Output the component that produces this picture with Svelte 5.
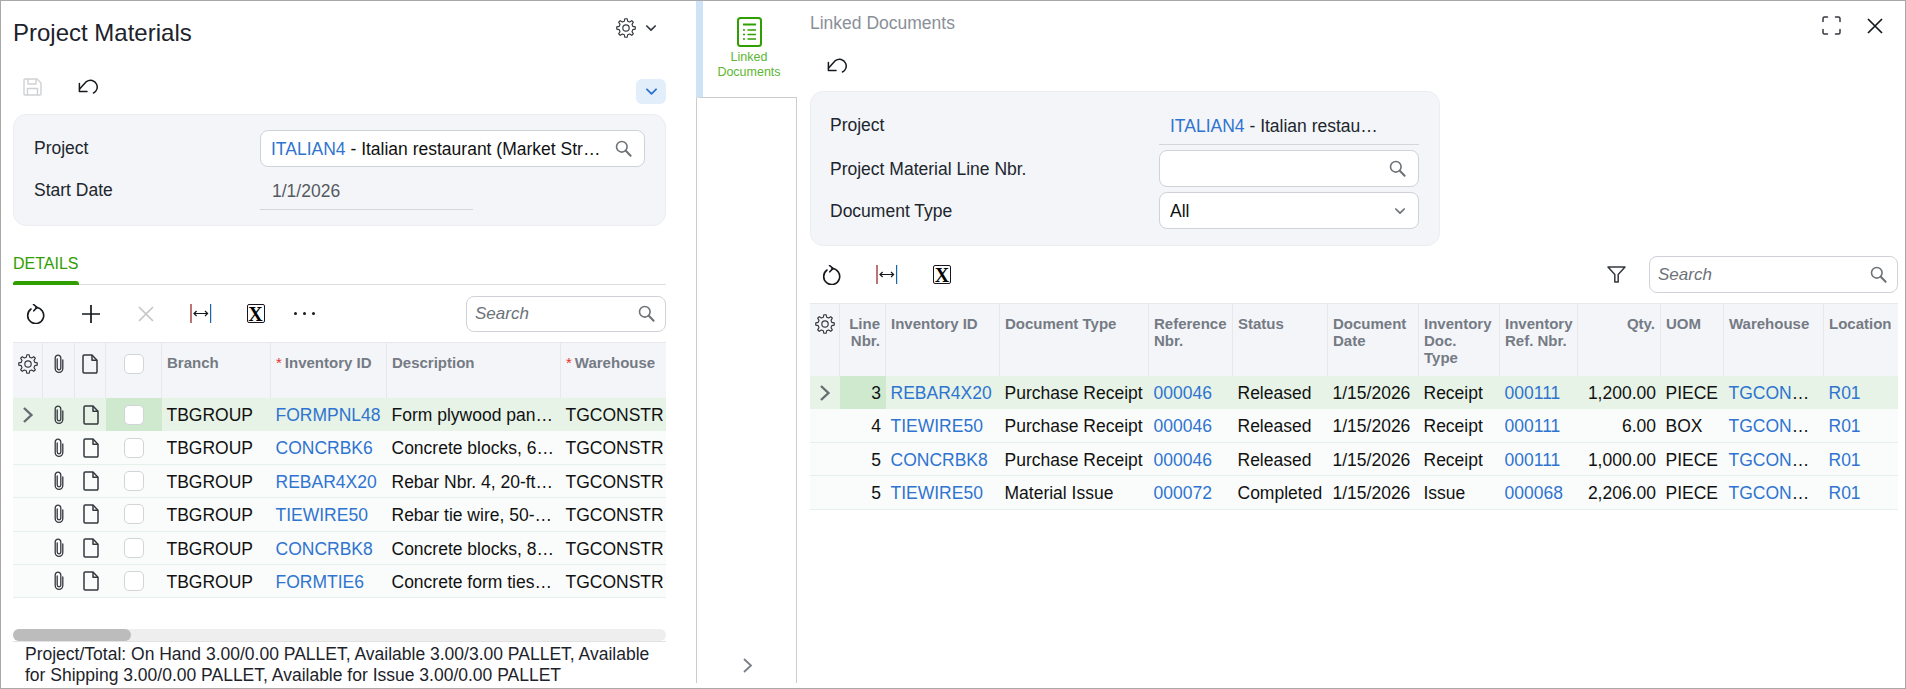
<script lang="ts">
  // outline gear with 8 teeth, 24x24 box
  function makeGear() {
    const pts: string[] = [];
    const teeth = 8;
    for (let i = 0; i < teeth; i++) {
      const a = (i / teeth) * Math.PI * 2;
      const step = Math.PI / teeth;
      const p = (r: number, t: number) =>
        `${(12 + r * Math.cos(t)).toFixed(2)} ${(12 + r * Math.sin(t)).toFixed(2)}`;
      pts.push(p(8.4, a - step * 0.62), p(11.2, a - step * 0.3), p(11.2, a + step * 0.3), p(8.4, a + step * 0.62));
    }
    return "M" + pts.join("L") + "Z";
  }
  const gearPath = makeGear();

  const materials = [
    { id: "FORMPNL48", desc: "Form plywood panels, 4x8 ft" },
    { id: "CONCRBK6", desc: "Concrete blocks, 6-inch standard" },
    { id: "REBAR4X20", desc: "Rebar Nbr. 4, 20-ft length" },
    { id: "TIEWIRE50", desc: "Rebar tie wire, 50-pound roll" },
    { id: "CONCRBK8", desc: "Concrete blocks, 8-inch standard" },
    { id: "FORMTIE6", desc: "Concrete form ties, 6-inch" },
  ];

  const linked = [
    { line: 3, id: "REBAR4X20", type: "Purchase Receipt", ref: "000046", status: "Released", invType: "Receipt", invRef: "000111", qty: "1,200.00", uom: "PIECE" },
    { line: 4, id: "TIEWIRE50", type: "Purchase Receipt", ref: "000046", status: "Released", invType: "Receipt", invRef: "000111", qty: "6.00", uom: "BOX" },
    { line: 5, id: "CONCRBK8", type: "Purchase Receipt", ref: "000046", status: "Released", invType: "Receipt", invRef: "000111", qty: "1,000.00", uom: "PIECE" },
    { line: 5, id: "TIEWIRE50", type: "Material Issue", ref: "000072", status: "Completed", invType: "Issue", invRef: "000068", qty: "2,206.00", uom: "PIECE" },
  ];
</script>

{#snippet gear(size)}
  <svg width={size} height={size} viewBox="0 0 24 24" fill="none" stroke="#33383f" stroke-width="1.4" stroke-linejoin="round">
    <path d={gearPath} />
    <circle cx="12" cy="12" r="3.8" />
  </svg>
{/snippet}

{#snippet search()}
  <svg width="17" height="17" viewBox="0 0 17 17" fill="none" stroke="#6d7278" stroke-width="1.6" stroke-linecap="round">
    <circle cx="6.8" cy="6.8" r="5.3" />
    <path d="M10.8 10.8L15.6 15.8" stroke-width="2" />
  </svg>
{/snippet}

{#snippet chevronDown(color, size)}
  <svg width={size} height={size} viewBox="0 0 12 12" fill="none" stroke={color} stroke-width="1.7" stroke-linecap="round" stroke-linejoin="round">
    <path d="M1.8 4L6 8.2L10.2 4" />
  </svg>
{/snippet}

{#snippet chevronRight()}
  <svg class="row-arrow" width="12" height="16" viewBox="0 0 12 16" fill="none" stroke="#666c74" stroke-width="2.4">
    <path d="M2 1L9.4 8L2 15" />
  </svg>
{/snippet}

{#snippet undo()}
  <svg width="21" height="15" viewBox="0 0 21 15" fill="none" stroke="#15181c" stroke-width="1.5" stroke-linecap="round" stroke-linejoin="round">
    <path d="M15.5 14C19 12.2 20 8.4 18.6 5.2C16.8 1.2 12 0 8.4 2.6L1.6 10" />
    <path d="M1.4 4.6V12.4H9" />
  </svg>
{/snippet}

{#snippet refresh()}
  <svg width="20" height="20" viewBox="0 0 20 20" fill="none" stroke="#15181c" stroke-width="1.6" stroke-linecap="round" stroke-linejoin="round">
    <path d="M5 5A8 8 0 1 0 10 3.500" />
    <path d="M7.500 0.500L11 3.400L7.800 6.800" />
  </svg>
{/snippet}

{#snippet autofit()}
  <svg width="22" height="19" viewBox="0 0 22 19" fill="none" stroke-width="1.2">
    <path d="M1 0V19" stroke="#8b1a1a" />
    <path d="M20.6 0V19" stroke="#1565b0" />
    <path d="M4 9.5H17.6M6.6 7L4 9.5L6.6 12M15 7L17.6 9.5L15 12" stroke="#15181c" />
  </svg>
{/snippet}

{#snippet excel()}
  <span class="excel">X</span>
{/snippet}

{#snippet clip()}
  <svg width="12" height="20" viewBox="0 0 12 20" fill="none" stroke="#33383f" stroke-width="1.3" stroke-linecap="round">
    <path d="M4.2 5V14a1.8 1.8 0 0 0 3.6 0V4a2.8 2.8 0 0 0-5.6 0V14.5a3.8 3.8 0 0 0 7.6 0V6" />
  </svg>
{/snippet}

{#snippet doc()}
  <svg width="16" height="20" viewBox="0 0 16 20" fill="none" stroke="#33383f" stroke-width="1.5" stroke-linejoin="round">
    <path d="M1 2.2A1.2 1.2 0 0 1 2.2 1H10L15 6.2V17.8A1.2 1.2 0 0 1 13.8 19H2.2A1.2 1.2 0 0 1 1 17.8Z" />
    <path d="M10 1V6.2H15" />
  </svg>
{/snippet}

<div class="window">
  <section class="left">
    <header class="page-head">
      <h1>Project Materials</h1>
      <div class="head-tools">
        {@render gear(20)}
        {@render chevronDown("#33383f", 12)}
      </div>
    </header>

    <div class="action-row">
      <svg class="save" width="19" height="18" viewBox="0 0 19 18" fill="none" stroke="#cfd1d4" stroke-width="1.4" stroke-linejoin="round">
        <path d="M1 2A1 1 0 0 1 2 1H14L18 5V16A1 1 0 0 1 17 17H2A1 1 0 0 1 1 16Z" />
        <path d="M5 1V6H13V1M4.500 17V10.500H14.500V17" />
      </svg>
      <span class="undo-wrap">{@render undo()}</span>
      <button class="collapse" aria-label="Collapse">{@render chevronDown("#2f74d0", 13)}</button>
    </div>

    <div class="form-panel left-form">
      <label for="project" class="top">Project</label>
      <div class="input" id="project">
        <span class="input-text"><a href="#top">ITALIAN4</a> - Italian restaurant (Market Street Renovation)</span>
        {@render search()}
      </div>
      <label for="start" class="lower">Start Date</label>
      <div class="readonly" id="start">1/1/2026</div>
    </div>

    <div class="tabs">
      <div class="tab">
        <span>DETAILS</span>
        <div class="tab-bar"></div>
      </div>
    </div>

    <div class="toolbar">
      <span class="tool">{@render refresh()}</span>
      <span class="tool">
        <svg width="18" height="18" viewBox="0 0 18 18" stroke="#15181c" stroke-width="1.7"><path d="M9 0V18M0 9H18" /></svg>
      </span>
      <span class="tool">
        <svg width="16" height="16" viewBox="0 0 16 16" stroke="#c4c6c9" stroke-width="1.7"><path d="M1 1L15 15M15 1L1 15" /></svg>
      </span>
      <span class="tool">{@render autofit()}</span>
      <span class="tool">{@render excel()}</span>
      <span class="tool dots"><i></i><i></i><i></i></span>
      <div class="search-box left-search">
        <span>Search</span>
        {@render search()}
      </div>
    </div>

    <div class="grid left-grid">
      <div class="grid-row head">
        <div class="cell icon-cell">{@render gear(20)}</div>
        <div class="cell icon-cell">{@render clip()}</div>
        <div class="cell icon-cell">{@render doc()}</div>
        <div class="cell icon-cell"><span class="check"></span></div>
        <div class="cell">Branch</div>
        <div class="cell"><em>*</em>Inventory ID</div>
        <div class="cell">Description</div>
        <div class="cell"><em>*</em>Warehouse</div>
      </div>
      {#each materials as item, index}
        <div class="grid-row body" class:selected={index === 0}>
          <div class="cell icon-cell">
            {#if index === 0}{@render chevronRight()}{/if}
          </div>
          <div class="cell icon-cell">{@render clip()}</div>
          <div class="cell icon-cell">{@render doc()}</div>
          <div class="cell icon-cell current"><span class="check"></span></div>
          <div class="cell">TBGROUP</div>
          <div class="cell"><a href="#top">{item.id}</a></div>
          <div class="cell">{item.desc}</div>
          <div class="cell whs">TGCONSTR</div>
        </div>
      {/each}
    </div>

    <div class="scrollbar"><div class="thumb"></div></div>
    <p class="totals">Project/Total: On Hand 3.00/0.00 PALLET, Available 3.00/3.00 PALLET, Available for Shipping 3.00/0.00 PALLET, Available for Issue 3.00/0.00 PALLET</p>
  </section>

  <aside class="side">
    <div class="side-tab">
      <svg width="25" height="30" viewBox="0 0 25 30" fill="none" stroke="#2f9e00" stroke-width="2">
        <rect x="1" y="1" width="23" height="28" rx="2.500" />
        <path d="M6 7.500H19" />
        <path d="M6 13H8M10.500 13H19M6 17.500H8M10.500 17.500H19M6 22H8M10.500 22H19" stroke-width="1.700" />
      </svg>
      <span>Linked<br />Documents</span>
    </div>
    <div class="side-rest">
      <svg width="10" height="15" viewBox="0 0 10 15" fill="none" stroke="#7a7f86" stroke-width="1.800">
        <path d="M1 1L8 7.500L1 14" />
      </svg>
    </div>
  </aside>

  <main class="right">
    <header class="right-head">
      <h2>Linked Documents</h2>
      <svg width="19" height="19" viewBox="0 0 19 19" fill="none" stroke="#33383f" stroke-width="1.500" stroke-linecap="round">
        <path d="M1 5.500V2.500A1.500 1.500 0 0 1 2.500 1H5.500M13.500 1H16.500A1.500 1.500 0 0 1 18 2.500V5.500M18 13.500V16.500A1.500 1.500 0 0 1 16.500 18H13.500M5.500 18H2.500A1.500 1.500 0 0 1 1 16.500V13.500" />
      </svg>
      <svg class="close" width="16" height="16" viewBox="0 0 16 16" stroke="#15181c" stroke-width="1.700"><path d="M1 1L15 15M15 1L1 15" /></svg>
    </header>

    <div class="undo-row">{@render undo()}</div>

    <div class="form-panel right-form">
      <label for="rproject" class="first">Project</label>
      <div class="readonly" id="rproject"><a href="#top">ITALIAN4</a> - Italian restau…</div>
      <label for="rline">Project Material Line Nbr.</label>
      <div class="input" id="rline">
        <span class="input-text"></span>
        {@render search()}
      </div>
      <label for="rtype">Document Type</label>
      <div class="input select" id="rtype">
        <span class="input-text">All</span>
        {@render chevronDown("#6d7278", 12)}
      </div>
    </div>

    <div class="toolbar right-toolbar">
      <span class="tool">{@render refresh()}</span>
      <span class="tool">{@render autofit()}</span>
      <span class="tool">{@render excel()}</span>
      <svg class="filter" width="19" height="17" viewBox="0 0 19 17" fill="none" stroke="#33383f" stroke-width="1.500" stroke-linejoin="round">
        <path d="M1 1H18L11.200 8.500V16H7.800V8.500Z" />
      </svg>
      <div class="search-box right-search">
        <span>Search</span>
        {@render search()}
      </div>
    </div>

    <div class="grid right-grid">
      <div class="grid-row head">
        <div class="cell icon-cell">{@render gear(20)}</div>
        <div class="cell num">Line Nbr.</div>
        <div class="cell">Inventory ID</div>
        <div class="cell">Document Type</div>
        <div class="cell">Reference Nbr.</div>
        <div class="cell">Status</div>
        <div class="cell">Document Date</div>
        <div class="cell">Inventory Doc. Type</div>
        <div class="cell">Inventory Ref. Nbr.</div>
        <div class="cell num">Qty.</div>
        <div class="cell">UOM</div>
        <div class="cell">Warehouse</div>
        <div class="cell">Location</div>
      </div>
      {#each linked as row, index}
        <div class="grid-row body" class:selected={index === 0}>
          <div class="cell icon-cell">
            {#if index === 0}{@render chevronRight()}{/if}
          </div>
          <div class="cell num current">{row.line}</div>
          <div class="cell"><a href="#top">{row.id}</a></div>
          <div class="cell">{row.type}</div>
          <div class="cell"><a href="#top">{row.ref}</a></div>
          <div class="cell">{row.status}</div>
          <div class="cell">1/15/2026</div>
          <div class="cell">{row.invType}</div>
          <div class="cell"><a href="#top">{row.invRef}</a></div>
          <div class="cell num">{row.qty}</div>
          <div class="cell">{row.uom}</div>
          <div class="cell"><a href="#top">TGCONSTR</a></div>
          <div class="cell"><a href="#top">R01</a></div>
        </div>
      {/each}
    </div>
  </main>
</div>

<style>
  :global(body) {
    margin: 0;
    background: #fff;
  }

  .window {
    width: 1906px;
    height: 689px;
    box-sizing: border-box;
    border: 1px solid #a8a8a8;
    display: flex;
    overflow: hidden;
    font-family: "Liberation Sans", Arial, sans-serif;
    font-size: 17.5px;
    color: #111;
  }

  a {
    color: #2f74d0;
    text-decoration: none;
  }

  h1,
  h2,
  p {
    margin: 0;
    font-weight: 400;
  }

  label {
    padding-top: 1px;
  }

  /* left pane */
  .left {
    width: 695px;
    flex-shrink: 0;
    box-sizing: border-box;
    padding: 0 30px 0 12px;
    display: flex;
    flex-direction: column;
    overflow: hidden;
  }

  .page-head {
    height: 66px;
    flex-shrink: 0;
    display: flex;
    justify-content: space-between;
    align-items: flex-start;
  }

  h1 {
    font-size: 24px;
    line-height: 28px;
    margin-top: 18px;
    color: #1d232b;
  }

  .head-tools {
    display: flex;
    align-items: center;
    gap: 9px;
    margin: 17px 9px 0 0;
  }

  .action-row {
    height: 47px;
    flex-shrink: 0;
    display: flex;
    align-items: flex-start;
  }

  .save {
    margin: 11px 0 0 10px;
  }

  .undo-wrap {
    margin: 11px 0 0 36px;
  }

  .collapse {
    margin: 12px 0 0 auto;
    width: 30px;
    height: 25px;
    padding: 0;
    border: 0;
    border-radius: 6px;
    background: #e3eefb;
    display: flex;
    align-items: center;
    justify-content: center;
  }

  .form-panel {
    box-sizing: border-box;
    flex-shrink: 0;
    background: #f4f5f8;
    border: 1px solid #ebedf0;
    border-radius: 13px;
    display: grid;
    align-items: center;
    color: #20262e;
  }

  .left-form {
    height: 112px;
    padding: 15px 20px 0;
    grid-template-columns: 226px 385px;
    grid-template-rows: 37px 43px;
    align-content: start;
  }

  .top {
    padding-top: 0;
  }

  .lower {
    padding-top: 4px;
  }

  .input {
    box-sizing: border-box;
    height: 37px;
    background: #fff;
    border: 1px solid #cfd2d8;
    border-radius: 8px;
    display: flex;
    align-items: center;
    padding: 0 12px 0 10px;
    gap: 12px;
    color: #111;
  }

  .input-text {
    flex: 1;
    min-width: 0;
    padding-top: 1px;
    white-space: nowrap;
    overflow: hidden;
    text-overflow: ellipsis;
  }

  .readonly {
    box-sizing: border-box;
    height: 100%;
    padding: 10px 0 0 12px;
    line-height: 28px;
    white-space: nowrap;
    border-bottom: 1px solid #d4d6da;
  }

  .left-form .readonly {
    width: 213px;
    color: #555a60;
  }

  .tabs {
    height: 59px;
    flex-shrink: 0;
    box-sizing: border-box;
    border-bottom: 1px solid #dcdee1;
    display: flex;
    align-items: flex-end;
  }

  .tab {
    margin-bottom: -1px;
    font-size: 16px;
    line-height: 20px;
    color: #2f9e00;
  }

  .tab span {
    display: block;
    margin-bottom: 7px;
  }

  .tab-bar {
    height: 4px;
    background: #2f9e00;
    border-radius: 3px 3px 0 0;
  }

  .toolbar {
    height: 57px;
    flex-shrink: 0;
    display: flex;
    align-items: center;
  }

  .tool {
    width: 54.800px;
    flex-shrink: 0;
    display: flex;
    justify-content: center;
    align-items: center;
  }

  .tool:first-child {
    margin-left: -4px;
  }

  .excel {
    box-sizing: border-box;
    width: 18px;
    height: 19px;
    border: 1.4px solid #1a1420;
    border-radius: 2px;
    display: flex;
    align-items: center;
    justify-content: center;
    font-family: "Liberation Serif", serif;
    font-weight: 700;
    font-size: 20px;
    line-height: 1;
    color: #000;
  }

  .dots {
    margin-left: -6px;
    gap: 6px;
  }

  .dots i {
    width: 3px;
    height: 3px;
    border-radius: 50%;
    background: #15181c;
  }

  .search-box {
    box-sizing: border-box;
    height: 36px;
    margin-left: auto;
    background: #fff;
    border: 1px solid #cfd2d8;
    border-radius: 8px;
    padding: 0 10px 0 8px;
    display: flex;
    align-items: center;
    justify-content: space-between;
    color: #6d7278;
    font-style: italic;
    font-size: 17px;
  }

  .left-search {
    width: 200px;
  }

  /* grids */
  .grid {
    flex-shrink: 0;
    overflow: hidden;
  }

  .grid-row {
    display: grid;
    align-items: stretch;
  }

  .left-grid .grid-row {
    grid-template-columns: 30px 32px 31px 56px 109px 116px 174px 105px;
  }

  .right-grid .grid-row {
    grid-template-columns: 30px 46px 114px 149px 84px 95px 91px 81px 78px 83px 63px 100px 74px;
  }

  .head {
    box-sizing: border-box;
    background: #f4f5f8;
    border-top: 1px solid #e6e8ec;
    color: #747b85;
    font-size: 15px;
    font-weight: 700;
    line-height: 17px;
  }

  .left-grid .head {
    height: 56px;
  }

  .right-grid .head {
    height: 73px;
  }

  .head .cell {
    padding: 11px 5px 0 5px;
    border-right: 1px solid #e6e8ec;
    white-space: normal;
    text-overflow: clip;
  }

  .head .cell:last-child {
    border-right: 0;
  }

  .left-grid .head .cell {
    padding-top: 11px;
    white-space: nowrap;
  }

  .head em {
    color: #e3342f;
    font-style: normal;
    font-weight: 400;
    margin-right: 3px;
  }

  .head .icon-cell {
    padding: 10px 0 0;
    align-items: flex-start;
  }

  .head .num {
    text-align: right;
    padding-right: 5px;
  }

  .body {
    box-sizing: border-box;
    height: 33.400px;
    background: #fafcfb;
    border-bottom: 1px solid #e7f1ec;
  }

  .body.selected {
    background: #e6f3e6;
    border-bottom: 0;
  }

  .cell {
    min-width: 0;
    padding: 0 5px 0 4.500px;
    white-space: nowrap;
    overflow: hidden;
    text-overflow: ellipsis;
    box-sizing: border-box;
  }

  .body .cell {
    padding-top: 1px;
    line-height: 33px;
  }

  .body .icon-cell {
    padding-top: 0;
  }

  .whs {
    padding-right: 0;
  }

  .icon-cell {
    padding: 0;
    display: flex;
    align-items: center;
    justify-content: center;
    overflow: visible;
  }

  .num {
    text-align: right;
  }

  .selected .current {
    background: #cfe9cf;
  }

  .check {
    box-sizing: border-box;
    width: 20px;
    height: 20px;
    background: #fff;
    border: 1.500px solid #d2d4d8;
    border-radius: 5px;
  }

  .scrollbar {
    height: 12px;
    margin-top: 31px;
    flex-shrink: 0;
    background: #eeeeee;
    border-radius: 6px;
  }

  .thumb {
    width: 118px;
    height: 100%;
    background: #bcbcbc;
    border-radius: 6px;
  }

  .totals {
    border-top: 1px solid #e2e2e2;
    padding: 2px 12px 0 12px;
    font-size: 17.500px;
    line-height: 21px;
    color: #1d232b;
  }

  /* side tabs */
  .side {
    width: 101px;
    height: 682px;
    flex-shrink: 0;
    display: flex;
    flex-direction: column;
  }

  .side-tab {
    height: 97px;
    flex-shrink: 0;
    box-sizing: border-box;
    border-left: 7px solid #cfe3f7;
    border-bottom: 1px solid #cccccc;
    padding: 16px 2px 0 0;
    display: flex;
    flex-direction: column;
    align-items: center;
    gap: 3px;
    color: #5cb531;
    font-size: 12.500px;
    line-height: 14.500px;
    text-align: center;
  }

  .side-rest {
    flex: 1;
    border-left: 1px solid #cccccc;
    border-right: 1px solid #cccccc;
    display: flex;
    align-items: flex-end;
    justify-content: center;
    padding: 0 0 10px 2px;
  }

  /* right pane */
  .right {
    flex: 1;
    min-width: 0;
    padding: 0 7px 0 13px;
    display: flex;
    flex-direction: column;
  }

  .right-head {
    height: 46px;
    flex-shrink: 0;
    display: flex;
    align-items: flex-start;
  }

  .right-head svg {
    margin-top: 15px;
  }

  h2 {
    font-size: 17.500px;
    line-height: 20px;
    margin: 12px auto 0 0;
    color: #8a8f98;
  }

  .right-head .close {
    margin: 17px 15px 0 26px;
  }

  .undo-row {
    height: 44px;
    flex-shrink: 0;
    padding: 10px 0 0 17px;
    box-sizing: border-box;
  }

  .right-form {
    width: 630px;
    height: 155px;
    padding: 0 19px 0 19px;
    grid-template-columns: 329px 260px;
    grid-template-rows: 53px 37px 37px;
    row-gap: 5px;
    align-content: start;
  }

  .right-form .first {
    padding-top: 13px;
  }

  .right-form .readonly {
    padding: 20px 0 0 11px;
  }

  .right-form .input {
    height: 100%;
  }

  .right-toolbar .tool:first-child {
    margin-left: -5px;
  }

  .filter {
    margin-left: auto;
  }

  .right-search {
    width: 249px;
    height: 37px;
    margin-left: 23px;
  }
</style>
